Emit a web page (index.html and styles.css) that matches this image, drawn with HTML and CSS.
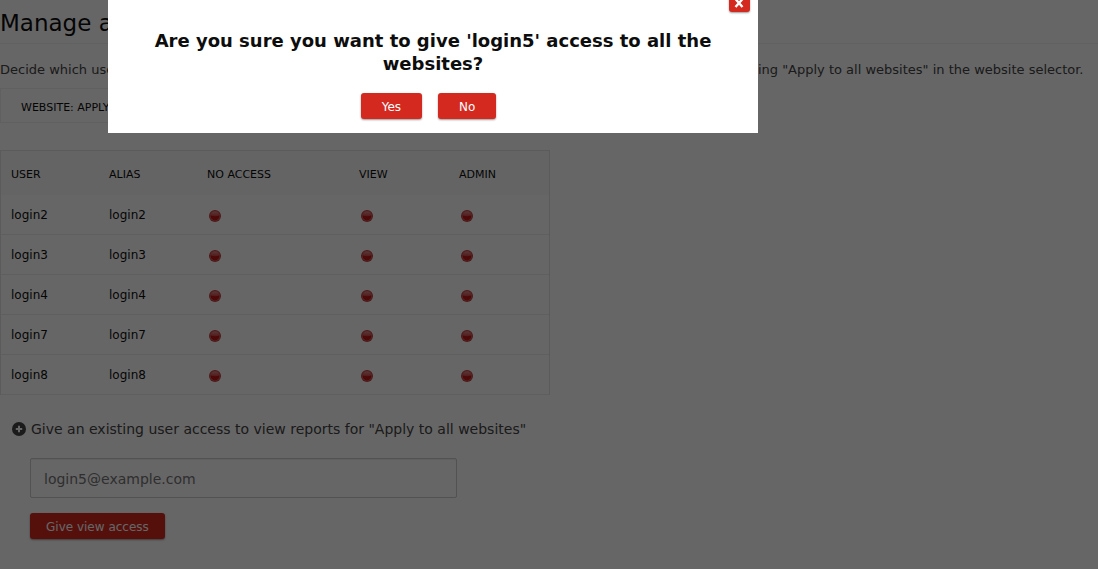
FILE: index.html
```html
<!DOCTYPE html>
<html lang="en">
<head>
<meta charset="utf-8">
<title>Manage access</title>
<link rel="stylesheet" href="styles.css">
</head>
<body>
<svg class="sprite" aria-hidden="true">
  <defs>
    <linearGradient id="gloss" x1="0" y1="0" x2="0" y2="1">
      <stop offset="0" stop-color="#e08c8c"/>
      <stop offset="1" stop-color="#cc4444"/>
    </linearGradient>
  </defs>
  <symbol id="dot" viewBox="0 0 12 12">
    <circle cx="6" cy="6" r="6" fill="#c04040"/>
    <circle cx="6" cy="6" r="5" fill="#dc6464"/>
    <circle cx="6" cy="6" r="4.4" fill="#c01414"/>
    <path d="M1.6 5.6a4.4 4.4 0 0 1 8.8 0Q6 7 1.6 5.6z" fill="url(#gloss)"/>
  </symbol>
</svg>
<main class="page">
  <h2 class="title">Manage access</h2>
  <p class="intro">Decide which users have access to your websites. You can also set permissions across all websites at once by choosing "Apply to all websites" in the website selector.</p>
  <button class="selector" type="button">Website: Apply to all websites</button>
  <table class="access">
    <thead>
      <tr><th class="name">User</th><th class="name">Alias</th><th class="none">No access</th><th class="view">View</th><th>Admin</th></tr>
    </thead>
    <tbody>
      <tr><td>login2</td><td>login2</td><td><button class="dot" type="button" aria-label="No access"><svg><use href="#dot"/></svg></button></td><td><button class="dot" type="button" aria-label="View"><svg><use href="#dot"/></svg></button></td><td><button class="dot" type="button" aria-label="Admin"><svg><use href="#dot"/></svg></button></td></tr>
      <tr><td>login3</td><td>login3</td><td><button class="dot" type="button" aria-label="No access"><svg><use href="#dot"/></svg></button></td><td><button class="dot" type="button" aria-label="View"><svg><use href="#dot"/></svg></button></td><td><button class="dot" type="button" aria-label="Admin"><svg><use href="#dot"/></svg></button></td></tr>
      <tr><td>login4</td><td>login4</td><td><button class="dot" type="button" aria-label="No access"><svg><use href="#dot"/></svg></button></td><td><button class="dot" type="button" aria-label="View"><svg><use href="#dot"/></svg></button></td><td><button class="dot" type="button" aria-label="Admin"><svg><use href="#dot"/></svg></button></td></tr>
      <tr><td>login7</td><td>login7</td><td><button class="dot" type="button" aria-label="No access"><svg><use href="#dot"/></svg></button></td><td><button class="dot" type="button" aria-label="View"><svg><use href="#dot"/></svg></button></td><td><button class="dot" type="button" aria-label="Admin"><svg><use href="#dot"/></svg></button></td></tr>
      <tr><td>login8</td><td>login8</td><td><button class="dot" type="button" aria-label="No access"><svg><use href="#dot"/></svg></button></td><td><button class="dot" type="button" aria-label="View"><svg><use href="#dot"/></svg></button></td><td><button class="dot" type="button" aria-label="Admin"><svg><use href="#dot"/></svg></button></td></tr>
    </tbody>
  </table>
  <form class="grant">
    <label class="grant-label" for="grant-user">
      <svg class="plus" viewBox="0 0 14 14" aria-hidden="true"><circle cx="7" cy="7" r="7" fill="#444"/><path d="M7 3.8v6.4M3.8 7h6.4" stroke="#fff" stroke-width="2"/></svg>
      <span>Give an existing user access to view reports for "Apply to all websites"</span>
    </label>
    <input class="grant-input" id="grant-user" type="text" value="login5@example.com">
    <button class="btn grant-btn" type="button">Give view access</button>
  </form>
</main>
<div class="overlay"></div>
<div class="dialog" role="dialog" aria-labelledby="question">
  <button class="close" type="button" aria-label="Close"><svg viewBox="0 0 10 10"><path d="M1.5 1l7 8M8.5 1l-7 8" stroke="#fff" stroke-width="2.4"/></svg></button>
  <h2 class="question" id="question">Are you sure you want to give 'login5' access to all the websites?</h2>
  <div class="actions">
    <button class="btn" type="button">Yes</button>
    <button class="btn" type="button">No</button>
  </div>
</div>
</body>
</html>
```

FILE: styles.css
```css
* { box-sizing: border-box; }
body {
  margin: 0;
  min-height: 100vh;
  background: #fff;
  color: #0d0d0d;
  font-family: "DejaVu Sans", Verdana, sans-serif;
  font-size: 12px;
  overflow: hidden;
}
button, input { font-family: inherit; margin: 0; }
.sprite { position: absolute; width: 0; height: 0; }
.page { display: flex; flex-direction: column; align-items: flex-start; }
.title {
  align-self: stretch;
  margin: 0;
  padding: 8px 0 5px;
  border-bottom: 1px solid #f2f2f2;
  font-size: 23px;
  line-height: 30px;
  font-weight: 400;
}
.intro { margin: 16px 0 8px; color: #444; font-size: 13px; line-height: 20px; white-space: nowrap; }
.selector {
  height: 35px;
  padding: 3px 20px 0;
  border: 1px solid #f0f0f0;
  background: #fff;
  color: #0d0d0d;
  font-size: 11px;
  text-transform: uppercase;
}
.access {
  width: 550px;
  margin-top: 27px;
  border: 1px solid #e4e4e4;
  border-bottom: 0;
  border-collapse: separate;
  border-spacing: 0;
  table-layout: fixed;
}
.access th {
  height: 44px;
  padding: 2px 10px 0;
  background: #fbfbfb;
  font-size: 11px;
  font-weight: 400;
  text-align: left;
  text-transform: uppercase;
}
.access td { height: 40px; padding: 0 10px; border-bottom: 1px solid #eee; }
.name { width: 98px; }
.none { width: 152px; }
.view { width: 100px; }
.dot { display: block; margin-top: 3px; padding: 0 2px; border: 0; background: none; }
.dot svg { display: block; width: 12px; height: 12px; }
.grant { display: flex; flex-direction: column; align-items: flex-start; padding: 23px 12px 30px; }
.grant-label { display: flex; align-items: center; gap: 5px; color: #444; font-size: 14px; line-height: 22px; }
.plus { width: 14px; height: 14px; }
.grant-input {
  width: 427px;
  height: 40px;
  margin: 18px 0 15px 18px;
  padding: 2px 13px 0;
  border: 1px solid #ccc;
  border-radius: 2px;
  background: #fff;
  box-shadow: inset 0 1px 1px #eee;
  color: #757575;
  font-size: 14px;
}
.btn {
  height: 26px;
  padding: 1px 20px 0;
  border: 0;
  border-radius: 3px;
  background: #d4291f;
  box-shadow: 0 1px 2px rgba(0, 0, 0, .4);
  color: #fff;
  font-size: 12px;
}
.actions .btn { padding: 1px 21px 0; }
.grant-btn { margin-left: 18px; padding: 1px 16px 0; }
.overlay { position: fixed; inset: 0; background: rgba(0, 0, 0, .6); }
.dialog {
  position: absolute;
  top: 0;
  left: 108px;
  width: 650px;
  padding: 29px 40px 14px;
  background: #fff;
}
.close {
  position: absolute;
  top: -9px;
  right: 8px;
  width: 21px;
  height: 21px;
  padding: 3px 5px 0;
  border: 0;
  border-radius: 3px;
  background: #d4291f;
  box-shadow: 0 1px 2px rgba(0, 0, 0, .4);
}
.close svg { display: block; width: 10px; height: 10px; }
.question { margin: 0 0 18px; font-size: 18px; line-height: 23px; text-align: center; }
.actions { display: flex; justify-content: center; gap: 16px; padding-right: 9px; }
```
